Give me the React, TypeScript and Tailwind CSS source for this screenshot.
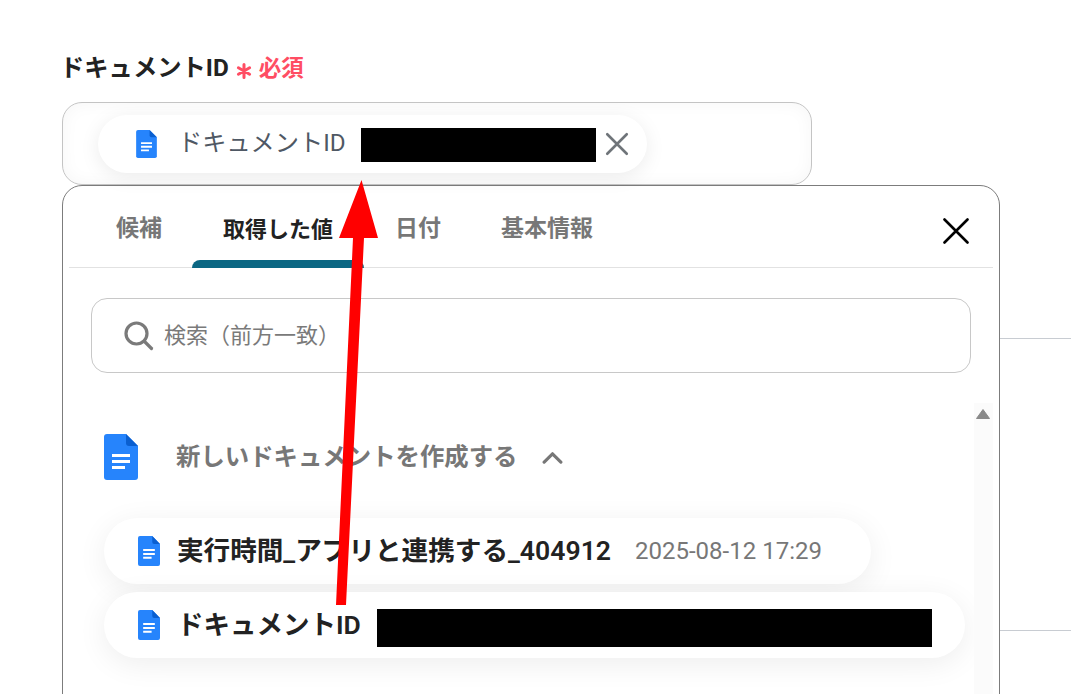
const sans = "font-['Roboto','Noto_Sans_CJK_JP',sans-serif]";

function DocIcon({ className }: { className: string }) {
  return (
    <svg viewBox="0 0 34 46" className={className}>
      <path d="M3 0H22L34 12V43a3 3 0 0 1-3 3H3a3 3 0 0 1-3-3V3a3 3 0 0 1 3-3Z" fill="#2684fc" />
      <path d="M22 0L34 12H25a3 3 0 0 1-3-3Z" fill="#0a5fd0" />
      <path d="M8 20H26V23H8ZM8 26H26V29H8ZM8 32H21V35H8Z" fill="#fff" />
    </svg>
  );
}

function Tab({ label, active }: { label: string; active?: boolean }) {
  return (
    <div
      className={`relative flex h-[82px] items-center justify-center pt-[4px] font-semibold ${
        active ? "w-[172px] text-[22px] text-[#222]" : "text-[23px] text-[#777]"
      }`}
    >
      {label}
      {active && <div className="absolute bottom-0 left-0 h-[8px] w-full rounded-t-[8px] bg-[#0b6783]" />}
    </div>
  );
}

function OptionPill({ children, width }: { children: React.ReactNode; width: string }) {
  return (
    <div className={`flex h-[66px] items-center rounded-full bg-white pl-[34px] shadow-[0_6px_30px_rgba(0,0,0,0.07)] ${width}`}>
      <DocIcon className="mr-[17px] h-[30px] w-[22px] shrink-0" />
      {children}
    </div>
  );
}

export default function App() {
  return (
    <div className={`relative h-[694px] w-[1071px] overflow-hidden bg-white ${sans}`}>
      {/* faint rows behind the popup */}
      <div className="absolute left-[1000px] right-0 top-[338px] h-px bg-[#c8ccd2]" />
      <div className="absolute left-[1000px] right-0 top-[630px] h-px bg-[#c8ccd2]" />

      <div className="pl-[62px] pt-[50px]">
        <div className="flex h-[36px] items-center text-[24.3px] font-bold leading-none text-[#222]">
          <span className="-ml-[2px]">ドキュメントID</span>
          <svg viewBox="0 0 16 16" className="ml-[7px] mt-[6px] h-[16px] w-[16px] text-[#ff4d63]" fill="none" stroke="currentColor" strokeWidth="3" strokeLinecap="round">
            <path d="M8 1.5V14.5M2.4 4.8L13.6 11.2M13.6 4.8L2.4 11.2" />
          </svg>
          <span className="ml-[7px] text-[22.5px] font-semibold text-[#ff4d63]">必須</span>
        </div>

        {/* field */}
        <div className="mt-[16px] flex h-[83px] w-[750px] items-center rounded-[20px] border border-[#c4c4c4] pl-[35px] shadow-[inset_0_0_18px_rgba(0,0,0,0.04)]">
          <div className="flex h-[58px] w-[549px] items-center rounded-full bg-white pl-[38px] shadow-[0_4px_20px_rgba(0,0,0,0.08)]">
            <DocIcon className="h-[28px] w-[21px] shrink-0" />
            <span className="ml-[21px] text-[24.2px] text-[#4f5864]">ドキュメントID</span>
            <div className="ml-[15px] mt-[2px] h-[34px] w-[235px] bg-black" />
            <svg viewBox="0 0 24 24" className="ml-[8px] h-[26px] w-[26px] text-[#6f7479]" fill="none" stroke="currentColor" strokeWidth="2.4" strokeLinecap="round">
              <path d="M3 3L21 21M21 3L3 21" />
            </svg>
          </div>
        </div>

        {/* popup */}
        <div className="h-[560px] w-[938px] rounded-t-[20px] border border-[#7c7c7c] bg-white px-[6px]">
          <div className="relative flex h-[82px] items-start border-b border-[#e2e2e2] pl-[47px]">
            <Tab label="候補" />
            <div className="ml-[30px]">
              <Tab label="取得した値" active />
            </div>
            <div className="ml-[31px]">
              <Tab label="日付" />
            </div>
            <div className="ml-[60px]">
              <Tab label="基本情報" />
            </div>
            <svg viewBox="0 0 26 26" className="absolute right-[24px] top-[32px] h-[26px] w-[26px] text-black" fill="none" stroke="currentColor" strokeWidth="2.6" strokeLinecap="round">
              <path d="M1.5 1.5L24.5 24.5M24.5 1.5L1.5 24.5" />
            </svg>
          </div>

          <div className="ml-[22px] mt-[30px] flex h-[75px] w-[880px] items-center rounded-[16px] border border-[#c8c8c8] pl-[32px]">
            <svg viewBox="0 0 30 30" className="h-[30px] w-[30px] text-[#7a7a7a]" fill="none" stroke="currentColor" strokeWidth="3.2" strokeLinecap="round">
              <circle cx="12.5" cy="12.5" r="10.5" />
              <path d="M20.5 20.5L27.5 27.5" />
            </svg>
            <span className="ml-[10px] text-[22px] text-[#7a7a7a]">検索（前方一致）</span>
          </div>

          <div className="relative mt-[30px] h-[300px]">
            {/* scrollbar */}
            <div className="absolute right-0 top-0 flex h-full w-[19px] justify-center bg-[#fbfbfb] pr-px pt-[6px]">
              <svg viewBox="0 0 14 10" className="h-[10px] w-[14px]">
                <path d="M7 0.5L13.5 9.5H0.5Z" fill="#8a8a8a" stroke="#8a8a8a" strokeLinejoin="round" />
              </svg>
            </div>

            <div className="flex items-center pl-[35px] pt-[31px]">
              <DocIcon className="h-[46px] w-[34px]" />
              <span className="ml-[38px] mt-[1px] text-[24.4px] font-semibold text-[#777]">新しいドキュメントを作成する</span>
              <svg viewBox="0 0 24 14" className="ml-[24px] mt-[1px] h-[13px] w-[23px] text-[#777]" fill="none" stroke="currentColor" strokeWidth="3.4" strokeLinecap="round" strokeLinejoin="round">
                <path d="M3 12L12 3L21 12" />
              </svg>
            </div>

            <div className="ml-[35px] mt-[38px] flex flex-col gap-[8px]">
              <OptionPill width="w-[767px]">
                <span className="text-[26.6px] font-semibold text-[#222]">実行時間_アプリと連携する_404912</span>
                <span className="ml-[24px] text-[24px] text-[#777]">2025-08-12 17:29</span>
              </OptionPill>
              <OptionPill width="w-[861px]">
                <span className="text-[26.5px] font-semibold text-[#222]">ドキュメントID</span>
                <div className="ml-[16px] mt-[6px] h-[38px] w-[555px] bg-black" />
              </OptionPill>
            </div>
          </div>
        </div>
      </div>

      {/* red annotation arrow */}
      <svg viewBox="0 0 1071 694" className="pointer-events-none absolute left-0 top-0 h-[694px] w-[1071px]">
        <path d="M336 605L353 238H339L361.5 180L378 238H364L346 605Z" fill="#ff0000" />
      </svg>
    </div>
  );
}
